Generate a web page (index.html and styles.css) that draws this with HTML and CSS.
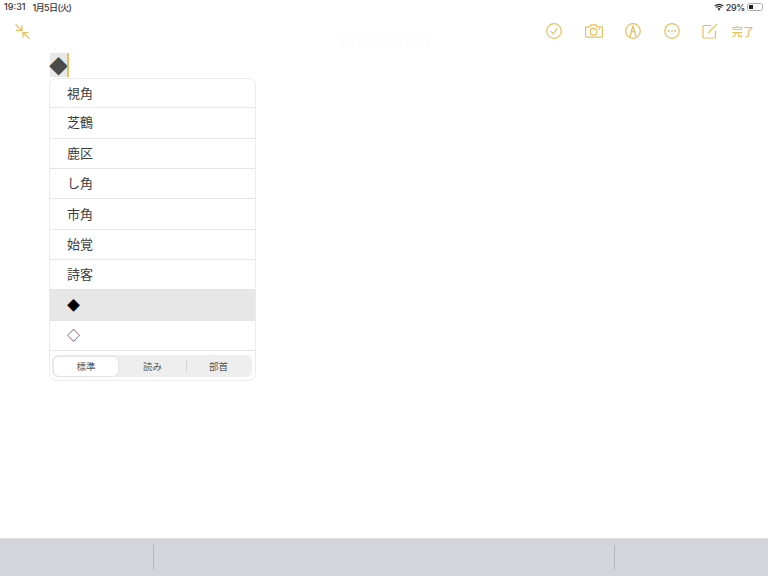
FILE: index.html
```html
<!DOCTYPE html>
<html lang="ja">
<head>
<meta charset="utf-8">
<title>メモ</title>
<link rel="stylesheet" href="styles.css">
</head>
<body>
<div class="screen">
  <div class="status">
    <div class="status-left"><span>19:31</span><span class="status-date">1月5日(火)</span></div>
    <div class="status-right">
      <svg class="wifi" width="10" height="8" viewBox="0 0 11 8"><path d="M5.5 8 3.8 6a2.4 2.4 0 0 1 3.4 0Z" fill="#333"/><path d="M2.6 4.7a4.2 4.2 0 0 1 5.8 0M.8 2.9a6.8 6.8 0 0 1 9.4 0" fill="none" stroke="#333" stroke-width="1.4"/></svg>
      <span class="pct">29%</span>
      <div class="battery"><div class="battery-level"></div></div>
    </div>
  </div>
  <div class="toolbar">
    <svg class="ico collapse" width="15" height="15" viewBox="0 0 15 15"><g fill="none" stroke="#e9bf5e" stroke-width="1.2"><path d="M.5.5 7 6.3M1 6.3h6v-5M14.5 14.5 8 8.7M13.5 8.7H8v5"/></g></svg>
    <div class="date-title">2021年1月5日 19:31</div>
    <div class="tools">
      <svg class="ico" width="16" height="16" viewBox="0 0 16 16"><g fill="none" stroke="#e9bf5e" stroke-width="1.2"><circle cx="8" cy="8" r="7.3"/><path d="M4.8 8.2 7.2 10.8 11.2 5.2"/></g></svg>
      <svg class="ico" width="18" height="14" viewBox="0 0 19 14"><g fill="none" stroke="#e9bf5e" stroke-width="1.2"><path d="M1.5 2.6h3.6L6.2.6h5.6l1.1 2h4.6a.8.8 0 0 1 .9.9v9a.8.8 0 0 1-.9.9H1.5a.8.8 0 0 1-.9-.9v-9a.8.8 0 0 1 .9-.9Z"/><circle cx="9" cy="7.8" r="3.5"/><circle cx="15" cy="5" r=".4"/></g></svg>
      <svg class="ico" width="16" height="16" viewBox="0 0 16 16"><g fill="none" stroke="#e9bf5e" stroke-width="1.2"><circle cx="8" cy="8" r="7.3"/><path d="M5 14 6.4 8 8 3.2 9.6 8 11 14M6.4 8.2q1.6 1 3.2 0"/></g><path d="M8 3.2 7 6.4h2Z" fill="#e9bf5e"/></svg>
      <svg class="ico" width="16" height="16" viewBox="0 0 16 16"><circle cx="8" cy="8" r="7.3" fill="none" stroke="#e9bf5e" stroke-width="1.2"/><g fill="#e9bf5e"><circle cx="4.8" cy="8" r=".9"/><circle cx="8" cy="8" r=".9"/><circle cx="11.2" cy="8" r=".9"/></g></svg>
      <svg class="ico" width="16" height="16" viewBox="0 0 16 16"><g fill="none" stroke="#e9bf5e" stroke-width="1.2"><path d="M13.5 7.5v6.9a.6.6 0 0 1-.6.6H1.6a.6.6 0 0 1-.6-.6V3.1a.6.6 0 0 1 .6-.6h7.4"/><path d="M6 10 15 .8"/></g></svg>
      <span class="done">完了</span>
    </div>
  </div>
  <main class="note">
    <div class="input-line">
      <span class="marked">◆</span><span class="caret"></span>
    </div>
    <div class="candidates">
      <div class="cand">視角</div>
      <div class="cand">芝鶴</div>
      <div class="cand">鹿区</div>
      <div class="cand">し角</div>
      <div class="cand">市角</div>
      <div class="cand">始覚</div>
      <div class="cand">詩客</div>
      <div class="cand selected">◆</div>
      <div class="cand">◇</div>
      <div class="seg-wrap">
        <div class="seg">
          <div class="seg-item active">標準</div>
          <div class="seg-item">読み</div>
          <div class="seg-sep"></div>
          <div class="seg-item">部首</div>
        </div>
      </div>
    </div>
  </main>
  <div class="keybar">
    <div class="key-left"></div>
    <div class="key-mid"></div>
    <div class="key-right"></div>
  </div>
</div>
</body>
</html>
```
FILE: styles.css
```css
* { box-sizing: border-box; }
html, body { margin: 0; padding: 0; background: #fff; }
body { font-family: "Noto Sans CJK JP", "Liberation Sans", sans-serif; }
.screen { width: 768px; height: 576px; display: flex; flex-direction: column; overflow: hidden; }
.status { height: 14px; padding: 0 4px 0 4px; display: flex; justify-content: space-between; align-items: center; font-family: Inter, "Noto Sans CJK JP", sans-serif; font-size: 9px; font-weight: 500; color: #333; }
.status-left { display: flex; gap: 7px; }
.status-date { letter-spacing: -.6px; }
.status-right { display: flex; align-items: center; gap: 2px; }
.pct { letter-spacing: -.3px; }
.battery { width: 16px; height: 8px; border: 1px solid #aaa; border-radius: 2.5px; padding: 1px; margin-right: 1px; }
.battery-level { width: 4px; height: 100%; background: #222; }
.toolbar { height: 38px; padding: 10px 14px 0 15px; display: flex; align-items: flex-start; position: relative; }
.ico { display: block; flex: none; }
.date-title { position: absolute; left: 339px; top: 23px; font-size: 10px; line-height: 12px; color: #fbfbfb; }
.tools { margin-left: auto; margin-top: -1px; display: flex; align-items: center; gap: 22.5px; height: 16px; }
.done { font-size: 11px; line-height: 16px; color: #e9bf5e; font-weight: 500; margin-left: -8.5px; }
.note { flex: 1; padding: 1px 0 0 49px; }
.input-line { display: flex; height: 24px; margin-left: 1px; }
.marked { width: 17px; height: 24px; background: #e8e8e8; color: #4a4a4a; font-size: 19px; line-height: 25px; display: flex; justify-content: center; }
.caret { width: 2px; height: 24px; background: #e9bf5e; }
.candidates { width: 207px; margin-top: 1px; border: 1px solid #ececec; border-radius: 7px; overflow: hidden; }
.cand { height: 30.35px; padding: 0 0 2px 17px; display: flex; align-items: center; font-size: 13px; line-height: 1; color: #3c3c3c; border-bottom: 1px solid #e6e6e6; }
.cand:first-child { height: 29.3px; }
.cand.selected { background: #e7e7e7; color: #000; }
.seg-wrap { padding: 4px 3px 3px 2px; height: 29px; }
.seg { height: 22px; background: #eeeeef; border-radius: 6px; display: grid; grid-template-columns: 65px 67px 1px 63px; align-items: center; padding: 0 2px; font-size: 9.5px; color: #555; }
.seg-item { text-align: center; line-height: 19px; }
.seg-item.active { background: #fff; border-radius: 5px; margin-right: 1px; box-shadow: 0 0 2px rgba(0,0,0,.15); }
.seg-sep { height: 12px; background: #d4d4d6; }
.keybar { height: 38px; background: #d4d5da; border-top: 1px solid #e2e2e5; display: flex; align-items: center; }
.key-left { width: 154px; height: 25px; border-right: 1px solid #b5b6ba; }
.key-mid { width: 461px; height: 25px; border-right: 1px solid #b5b6ba; }
.key-right { flex: 1; }
```
